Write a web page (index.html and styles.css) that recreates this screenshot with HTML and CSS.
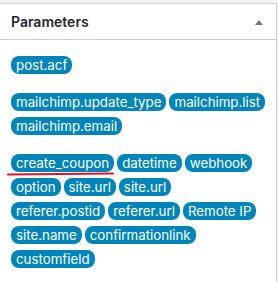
FILE: index.html
```html
<!DOCTYPE html>
<html lang="en">
<head>
    <meta charset="UTF-8">
    <meta name="viewport" content="width=device-width, initial-scale=1.0">
    <title>Parameters</title>
    <link rel="stylesheet" href="styles.css">
</head>
<body>
    <div class="postbox">
        <div class="postbox-header">
            <h2>Parameters</h2>
            <svg class="toggle" width="8" height="5" viewBox="0 0 8 5"><polygon points="4,0 8,5 0,5" fill="#72777c"/></svg>
        </div>

        <div class="inside">
            <div class="tag-group">
                <span class="tag">post.acf</span>
            </div>
            <div class="tag-group">
                <span class="tag">mailchimp.update_type</span>
                <span class="tag">mailchimp.list</span>
                <span class="tag">mailchimp.email</span>
            </div>
            <div class="tag-group">
                <span class="tag marked">create_coupon</span>
                <span class="tag">datetime</span>
                <span class="tag">webhook</span>
                <span class="tag">option</span>
                <span class="tag">site.url</span>
                <span class="tag">site.url</span>
                <span class="tag">referer.postid</span>
                <span class="tag">referer.url</span>
                <span class="tag">Remote IP</span>
                <span class="tag">site.name</span>
                <span class="tag">confirmationlink</span>
                <span class="tag">customfield</span>
            </div>
        </div>
    </div>
</body>
</html>
```

FILE: styles.css
```css
body {
    margin: 0;
    padding-top: 3px;
    background: #f1f1f1;
    font-family: Inter, "Liberation Sans", Arial, sans-serif;
}

/* Box (runs on past the bottom of the view) */
.postbox {
    margin-left: -1px;
    width: 276px;
    height: 278px;
    overflow: hidden;
    background: #fff;
    border: 1px solid #ccd0d4;
    border-bottom: none;
}

.postbox-header {
    display: flex;
    align-items: center;
    justify-content: space-between;
    height: 35px;
    padding: 0 13px 0 11px;
    border-bottom: 1px solid #ccd0d4;
}

.postbox-header h2 {
    margin: 0;
    font-size: 14px;
    font-weight: 600;
    color: #23282d;
}

.toggle {
    margin-top: 1px;
}

/* Tags */
.inside {
    padding: 16px 10px 0 11px;
}

.tag-group {
    display: flex;
    flex-wrap: wrap;
    gap: 6px 3px;
    margin-bottom: 19px;
}

.tag-group:last-child {
    margin-bottom: 0;
}

.tag {
    position: relative;
    display: inline-block;
    height: 18px;
    line-height: 18px;
    padding: 0 5px;
    border-radius: 8px;
    background: #0085ba;
    color: #fff;
    font-size: 13.3px;
}

.marked::after {
    content: "";
    position: absolute;
    left: -4px;
    right: 0;
    bottom: -3px;
    height: 2px;
    border-radius: 1px;
    background: #e3102a;
    transform: rotate(-0.6deg);
}
```
